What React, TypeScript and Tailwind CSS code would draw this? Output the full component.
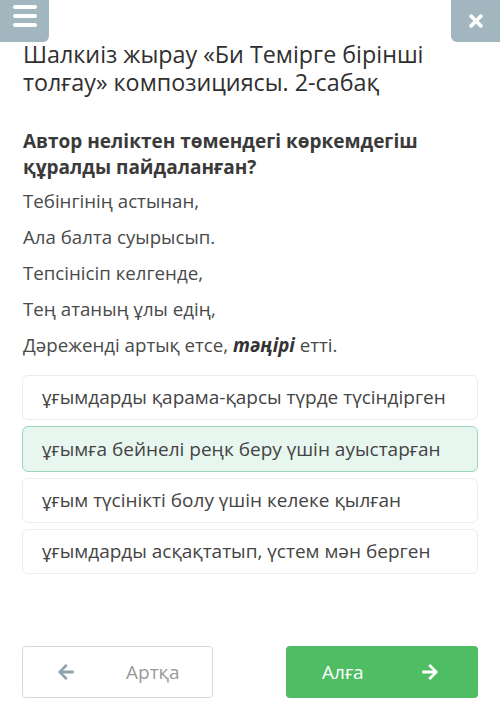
import { FaArrowLeft, FaArrowRight, FaTimes } from "react-icons/fa";

const verses = [
  "Тебінгінің астынан,",
  "Ала балта суырысып.",
  "Тепсінісіп келгенде,",
  "Тең атаның ұлы едің,",
];

const options = [
  "ұғымдарды қарама-қарсы түрде түсіндірген",
  "ұғымға бейнелі реңк беру үшін ауыстарған",
  "ұғым түсінікті болу үшін келеке қылған",
  "ұғымдарды асқақтатып, үстем мән берген",
];

export default function App() {
  return (
    <div className="w-[500px] h-[722px] bg-white text-[#333] font-['Open_Sans',sans-serif] flex flex-col">
      <div className="flex justify-between h-[42px]">
        <button className="w-[49px] h-[42px] rounded-br-[6px] bg-[#a2b6c0] flex flex-col items-center justify-start pt-[5px] gap-[5px]">
          <span className="block w-[24px] h-[4px] rounded-full bg-white" />
          <span className="block w-[24px] h-[4px] rounded-full bg-white" />
          <span className="block w-[24px] h-[4px] rounded-full bg-white" />
        </button>
        <button className="w-[49px] h-[42px] rounded-bl-[6px] bg-[#a2b6c0] flex items-center justify-center text-white">
          <FaTimes className="w-[20px] h-[20px]" />
        </button>
      </div>

      <h1 className="px-[23px] -mt-[2px] text-[23.3px] leading-[28px] text-[#2f2f2f]">
        Шалкиіз жырау «Би Темірге бірінші толғау» композициясы. 2-сабақ
      </h1>

      <h2 className="px-[23px] mt-[32px] text-[19px] leading-[26px] font-bold text-[#3a3a3a]">
        Автор неліктен төмендегі көркемдегіш құралды пайдаланған?
      </h2>

      <div className="px-[23px] mt-[8px] flex flex-col gap-[10px] text-[18.7px] leading-[26px] text-[#4a4a4a]">
        {verses.map((v) => (
          <p key={v}>{v}</p>
        ))}
        <p>
          Дәреженді артық етсе, <b className="italic font-bold text-[#333]">тәңірі</b> етті.
        </p>
      </div>

      <div className="px-[22px] mt-[17px] flex flex-col gap-[6px]">
        {options.map((o, i) => (
          <div
            key={o}
            className={
              i === 1
                ? "h-[46px] flex items-center px-[19px] rounded-[6px] border border-[#9ed5bf] bg-[#e8f6f0] text-[19px] text-[#444]"
                : "h-[45px] flex items-center px-[19px] rounded-[6px] border border-[#ececec] bg-white text-[19px] text-[#444]"
            }
          >
            {o}
          </div>
        ))}
      </div>

      <div className="px-[22px] mt-auto mb-[24px] flex justify-between">
        <button className="w-[191px] h-[52px] rounded-[4px] border border-[#d5d9dc] bg-white flex items-center pl-[34px] text-[19px] text-[#999]">
          <FaArrowLeft className="w-[18px] h-[18px] text-[#8fa3af]" />
          <span className="ml-[51px]">Артқа</span>
        </button>
        <button className="w-[192px] h-[52px] rounded-[4px] bg-[#4ebd64] flex items-center pl-[36px] text-[19px] text-white">
          <span>Алға</span>
          <FaArrowRight className="w-[18px] h-[18px] ml-[57px]" />
        </button>
      </div>
    </div>
  );
}
